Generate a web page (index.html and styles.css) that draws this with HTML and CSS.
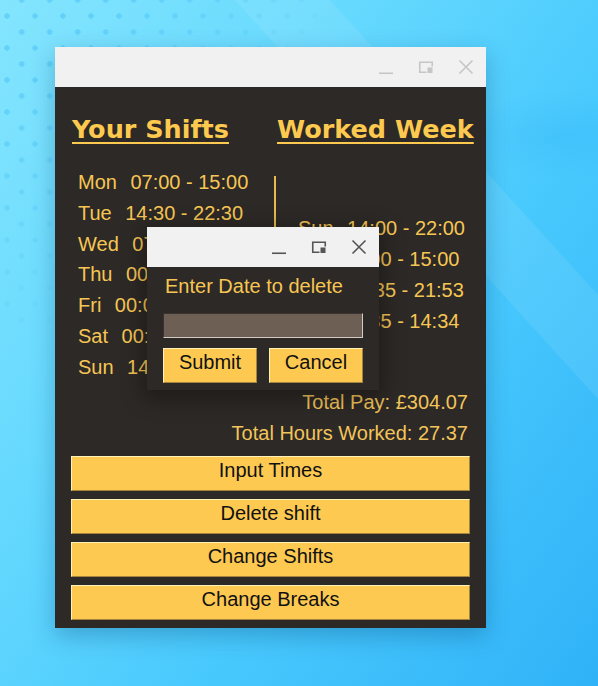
FILE: index.html
```html
<!DOCTYPE html>
<html lang="en">
<head>
<meta charset="utf-8">
<title>Shifts</title>
<link rel="stylesheet" href="styles.css">
</head>
<body>
  <div class="window main-window">
    <div class="titlebar">
      <span class="tb-btn"><svg width="16" height="16" viewBox="0 0 16 16"><path d="M1 14.25H15" stroke="currentColor" stroke-width="1.6" fill="none"/></svg></span>
      <span class="tb-btn"><svg width="16" height="16" viewBox="0 0 16 16"><path d="M8.5 13.25H1.75V3.25H14.25V7.5" stroke="currentColor" stroke-width="1.6" fill="none"/><rect x="9.5" y="8.5" width="5" height="5.5" fill="currentColor"/></svg></span>
      <span class="tb-btn"><svg width="16" height="16" viewBox="0 0 16 16"><path d="M1.5 1.5L14.5 14.5M14.5 1.5L1.5 14.5" stroke="currentColor" stroke-width="1.6" fill="none"/></svg></span>
    </div>
    <div class="content">
      <div class="headings">
        <span class="heading">Your Shifts</span>
        <span class="heading">Worked Week</span>
      </div>
      <div class="lists">
        <div class="col col-left">
          <div class="row"><span>Mon</span><span>07:00 - 15:00</span></div>
          <div class="row"><span>Tue</span><span>14:30 - 22:30</span></div>
          <div class="row"><span>Wed</span><span>07:00 - 15:00</span></div>
          <div class="row"><span>Thu</span><span>00:00 - 00:00</span></div>
          <div class="row"><span>Fri</span><span>00:00 - 00:00</span></div>
          <div class="row"><span>Sat</span><span>00:00 - 00:00</span></div>
          <div class="row"><span>Sun</span><span>14:00 - 22:00</span></div>
        </div>
        <div class="sep"></div>
        <div class="col col-right">
          <div class="row"><span>Sun</span><span>14:00 - 22:00</span></div>
          <div class="row"><span>Sat</span><span>07:00 - 15:00</span></div>
          <div class="row"><span>Thu</span><span>13:35 - 21:53</span></div>
          <div class="row"><span>Sat</span><span>06:35 - 14:34</span></div>
        </div>
      </div>
      <div class="totals">
        <div>Total Pay: £304.07</div>
        <div>Total Hours Worked: 27.37</div>
      </div>
      <div class="actions">
        <button class="btn">Input Times</button>
        <button class="btn">Delete shift</button>
        <button class="btn">Change Shifts</button>
        <button class="btn">Change Breaks</button>
      </div>
    </div>
  </div>

  <div class="window dialog">
    <div class="titlebar">
      <span class="tb-btn"><svg width="16" height="16" viewBox="0 0 16 16"><path d="M1 14.25H15" stroke="currentColor" stroke-width="1.6" fill="none"/></svg></span>
      <span class="tb-btn"><svg width="16" height="16" viewBox="0 0 16 16"><path d="M8.5 13.25H1.75V3.25H14.25V7.5" stroke="currentColor" stroke-width="1.6" fill="none"/><rect x="9.5" y="8.5" width="5" height="5.5" fill="currentColor"/></svg></span>
      <span class="tb-btn"><svg width="16" height="16" viewBox="0 0 16 16"><path d="M1.5 1.5L14.5 14.5M14.5 1.5L1.5 14.5" stroke="currentColor" stroke-width="1.6" fill="none"/></svg></span>
    </div>
    <div class="dlg-body">
      <div class="dlg-label">Enter Date to delete</div>
      <div class="dlg-entry"></div>
      <div class="dlg-buttons">
        <button class="btn dlg-btn">Submit</button>
        <button class="btn dlg-btn">Cancel</button>
      </div>
    </div>
  </div>
</body>
</html>
```

FILE: styles.css
```css
html {
  margin: 0;
  width: 598px;
  height: 686px;
  overflow: hidden;
}

body {
  margin: 0;
  position: relative;
  box-sizing: border-box;
  width: 598px;
  height: 686px;
  overflow: hidden;
  padding: 47px 0 0 55px;
  font-family: "Liberation Sans", Arial, sans-serif;
  background:
    linear-gradient(47.7deg, transparent 635px, rgba(255, 255, 255, 0.08) 636px, rgba(255, 255, 255, 0.08) 705px, transparent 706px),
    radial-gradient(ellipse 90px 45px at 560px 135px, rgba(20, 150, 240, 0.14), transparent),
    linear-gradient(125deg, #84e5fe 0%, #66d9fe 33%, #48c9fd 63%, #30b2f8 100%);
}

/* wallpaper dots */
body::before {
  content: "";
  position: absolute;
  left: 0;
  top: 0;
  width: 320px;
  height: 330px;
  background-image:
    radial-gradient(circle, rgba(40, 170, 240, 0.32) 2.4px, transparent 3px),
    radial-gradient(circle, rgba(40, 170, 240, 0.32) 2.4px, transparent 3px);
  background-size: 28px 32px, 28px 32px;
  background-position: 7.7px -16px, -7px 0;
  -webkit-mask-image: linear-gradient(135deg, #000 15%, rgba(0,0,0,0.4) 40%, transparent 62%);
  mask-image: linear-gradient(135deg, #000 15%, rgba(0,0,0,0.4) 40%, transparent 62%);
}

.window {
  background: #2d2926;
}

.main-window {
  position: relative;
  z-index: 1;
  width: 431px;
  box-shadow: 0 8px 22px rgba(0, 60, 110, 0.3);
}

.titlebar {
  height: 40px;
  background: #f1f1f1;
  display: flex;
  justify-content: flex-end;
}

.tb-btn {
  width: 40px;
  height: 40px;
  display: flex;
  align-items: center;
  justify-content: center;
  color: #c6c6c6;
}

.dialog .tb-btn {
  color: #555555;
}

.content {
  padding: 28px 16px 8px 16px;
}

.headings {
  display: flex;
  gap: 48px;
  padding-left: 1px;
  white-space: nowrap;
  font-family: "DejaVu Sans", sans-serif;
  font-weight: bold;
  font-size: 25.5px;
  line-height: 29px;
  color: #fdc94f;
}

.heading {
  flex: none;
  text-decoration: underline;
  text-decoration-thickness: 2px;
  text-underline-offset: 4px;
}

.lists {
  display: flex;
  margin-top: 23px;
  padding-left: 7px;
}

.col-left {
  width: 196px;
}

.sep {
  width: 2px;
  margin: 9px 0;
  background: #e6bb4f;
}

.col-right {
  margin-left: 22px;
  align-self: center;
}

.row {
  display: flex;
  gap: 13.5px;
  font-size: 20px;
  line-height: 30.8px;
  color: #f6c654;
  white-space: pre;
}

.totals {
  margin-top: 4px;
  padding-right: 2px;
  text-align: right;
  font-size: 20px;
  line-height: 31px;
  color: #f2c45a;
}

.actions {
  margin-top: 7px;
  display: flex;
  flex-direction: column;
  gap: 8px;
}

.btn {
  display: block;
  box-sizing: border-box;
  height: 35px;
  margin: 0;
  padding: 0 0 6px 0;
  border: 1px solid;
  border-color: #fff2b8 #a4843c #a4843c #fff2b8;
  border-radius: 0;
  background: #fdc951;
  color: #111111;
  font-family: "Liberation Sans", Arial, sans-serif;
  font-size: 20px;
  line-height: 27px;
  text-align: center;
}

.dialog {
  position: absolute;
  z-index: 2;
  left: 147px;
  top: 227px;
  width: 232px;
  box-shadow: 0 5px 20px 4px rgba(0, 0, 0, 0.35);
}

.dlg-body {
  padding: 8px 16px 7px 16px;
}

.dlg-label {
  padding-left: 2px;
  font-size: 20px;
  line-height: 23px;
  color: #f6c654;
}

.dlg-entry {
  box-sizing: border-box;
  margin-top: 15px;
  width: 200px;
  height: 25px;
  background: #6e5f55;
  border: 1px solid;
  border-color: #3a3330 #d2cbc4 #d2cbc4 #3a3330;
}

.dlg-buttons {
  margin-top: 10px;
  display: flex;
  gap: 12px;
}

.dlg-btn {
  width: 94px;
  padding-bottom: 8px;
}
```
